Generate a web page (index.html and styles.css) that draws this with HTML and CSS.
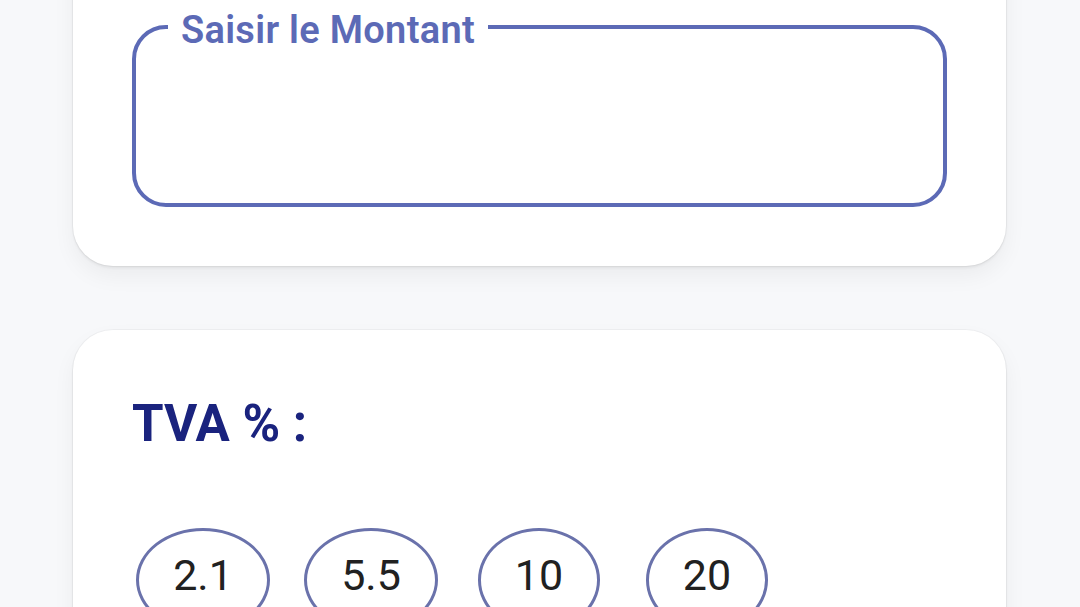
FILE: index.html
```html
<!DOCTYPE html>
<html lang="fr">
<head>
<meta charset="utf-8">
<title>TVA</title>
<link rel="stylesheet" href="styles.css">
</head>
<body>
<main class="page">
  <section class="card card-amount">
    <fieldset class="field">
      <legend class="field-label">Saisir le Montant</legend>
      <div class="field-input"></div>
    </fieldset>
  </section>
  <section class="card card-tva">
    <h2 class="tva-title">TVA % :</h2>
    <div class="chips">
      <button class="chip">2.1</button>
      <button class="chip">5.5</button>
      <button class="chip">10</button>
      <button class="chip">20</button>
    </div>
  </section>
</main>
</body>
</html>
```

FILE: styles.css
```css
html, body {
  margin: 0;
  padding: 0;
  background: #f7f8fa;
  overflow: hidden;
  height: 100%;
}
body {
  font-family: Roboto, "Liberation Sans", sans-serif;
}
.page {
  padding: 0 74px 0 73px;
  display: flex;
  flex-direction: column;
  gap: 64px;
}
.card {
  background: #ffffff;
  border-radius: 40px;
  box-shadow: 0 0 0 1px rgba(0,0,0,0.035), 0 2px 3px rgba(0,0,0,0.06), 0 10px 22px rgba(0,0,0,0.05);
}
.card-amount {
  margin-top: -60px;
  padding: 68px 59px 59px;
}
.field {
  margin: 0;
  padding: 0;
  border: 4px solid #5c6ab6;
  border-radius: 34px;
  min-width: 0;
}
.field-label {
  position: relative;
  top: 3px;
  margin-left: 32px;
  padding: 0 13px 0 13px;
  font-size: 38px;
  line-height: 38px;
  font-weight: 600;
  letter-spacing: 0.3px;
  color: #5c6ab6;
}
.field-input {
  height: 157px;
}
.card-tva {
  padding: 68px 59px 80px;
  height: 400px;
}
.tva-title {
  margin: 0;
  font-size: 51px;
  line-height: 52px;
  font-weight: 700;
  color: #1a237e;
}
.chips {
  margin: 78px 0 0 -13px;
  display: grid;
  grid-template-columns: repeat(4, 168px);
  justify-items: center;
}
.chip {
  box-sizing: border-box;
  height: 104px;
  padding: 23px 34px 0;
  background: #ffffff;
  border: 3px solid #6a72ab;
  border-radius: 50%;
  font-family: Roboto, "Liberation Sans", sans-serif;
  font-size: 43px;
  line-height: 43px;
  font-weight: 400;
  color: #212121;
  display: flex;
  align-items: flex-start;
  justify-content: center;
}
```
